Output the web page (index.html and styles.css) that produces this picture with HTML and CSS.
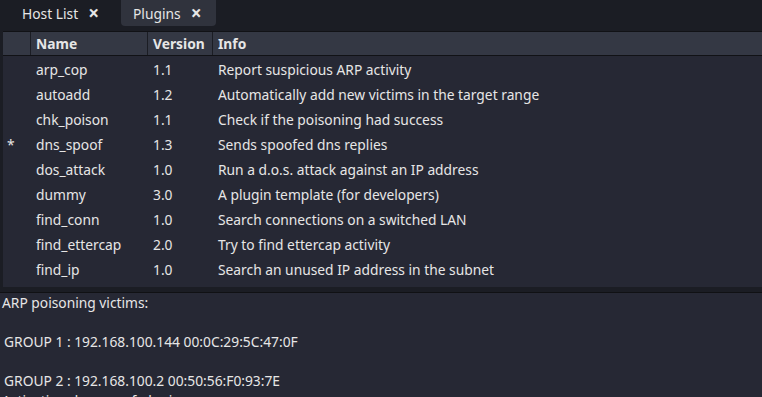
FILE: index.html
```html
<!DOCTYPE html>
<html lang="en">
<head>
    <meta charset="UTF-8">
    <meta name="viewport" content="width=device-width, initial-scale=1.0">
    <title>Plugins</title>
    <link rel="stylesheet" href="styles.css">
</head>
<body>
    <div class="tabs">
        <div class="tab">Host List <span class="tab-close">×</span></div>
        <div class="tab active">Plugins <span class="tab-close">×</span></div>
    </div>

    <div class="plugins">
        <div class="row head">
            <div class="cell mark"></div>
            <div class="cell">Name</div>
            <div class="cell">Version</div>
            <div class="cell">Info</div>
        </div>
        <div class="rows">
            <div class="row"><div class="cell mark"></div><div class="cell">arp_cop</div><div class="cell">1.1</div><div class="cell">Report suspicious ARP activity</div></div>
            <div class="row"><div class="cell mark"></div><div class="cell">autoadd</div><div class="cell">1.2</div><div class="cell">Automatically add new victims in the target range</div></div>
            <div class="row"><div class="cell mark"></div><div class="cell">chk_poison</div><div class="cell">1.1</div><div class="cell">Check if the poisoning had success</div></div>
            <div class="row"><div class="cell mark">*</div><div class="cell">dns_spoof</div><div class="cell">1.3</div><div class="cell">Sends spoofed dns replies</div></div>
            <div class="row"><div class="cell mark"></div><div class="cell">dos_attack</div><div class="cell">1.0</div><div class="cell">Run a d.o.s. attack against an IP address</div></div>
            <div class="row"><div class="cell mark"></div><div class="cell">dummy</div><div class="cell">3.0</div><div class="cell">A plugin template (for developers)</div></div>
            <div class="row"><div class="cell mark"></div><div class="cell">find_conn</div><div class="cell">1.0</div><div class="cell">Search connections on a switched LAN</div></div>
            <div class="row"><div class="cell mark"></div><div class="cell">find_ettercap</div><div class="cell">2.0</div><div class="cell">Try to find ettercap activity</div></div>
            <div class="row"><div class="cell mark"></div><div class="cell">find_ip</div><div class="cell">1.0</div><div class="cell">Search an unused IP address in the subnet</div></div>
        </div>
    </div>

    <div class="console">
        <p>ARP poisoning victims:</p>
        <p>&nbsp;</p>
        <p class="indent">GROUP 1 : 192.168.100.144 00:0C:29:5C:47:0F</p>
        <p>&nbsp;</p>
        <p class="indent">GROUP 2 : 192.168.100.2 00:50:56:F0:93:7E</p>
        <p>Activating dns_spoof plugin...</p>
    </div>
</body>
</html>
```

FILE: styles.css
```css
html, body {
    margin: 0;
    height: 100%;
    overflow: hidden;
}
body {
    font-family: 'Noto Sans', sans-serif;
    font-size: 13.8px;
    color: #e6e6e6;
    background-color: #1b1d24;
}
.tabs {
    display: flex;
    height: 31px;
    padding-left: 8px;
}
.tab {
    display: flex;
    align-items: center;
    height: 26px;
    padding: 0 22px 0 14px;
    color: #e6e6e6;
}
.tab.active {
    background-color: #30333d;
    border-radius: 0 0 4px 4px;
    padding: 0 14px 0 12px;
}
.tab-close {
    font-weight: bold;
    font-size: 19px;
    line-height: 1;
    margin-left: 10px;
}
.plugins {
    margin-left: 3px;
    height: 255px;
    display: flex;
    flex-direction: column;
    border-top: 1px solid #111216;
}
.row {
    display: grid;
    grid-template-columns: 28px 117px 65px 1fr;
    height: 25px;
    align-items: center;
}
.row.head {
    height: 23px;
    background-color: #343844;
    font-weight: bold;
    border-bottom: 1px solid #111216;
}
.row.head .cell {
    height: 100%;
    display: flex;
    align-items: center;
    border-right: 1px solid #1b1d24;
    padding-left: 5px;
}
.row.head .cell:last-child {
    border-right: none;
}
.rows {
    flex: 1;
    background-color: #262834;
    padding-top: 1px;
}
.cell {
    padding-left: 5px;
    white-space: nowrap;
}
.cell.mark {
    padding-left: 4px;
}
.console {
    margin-top: 5px;
    border-top: 1px solid #101114;
    background-color: #262834;
    height: 200px;
    padding-left: 2px;
    padding-top: 0;
}
.console p {
    margin: 0;
    line-height: 19.5px;
}
.console .indent {
    padding-left: 2px;
}
```
